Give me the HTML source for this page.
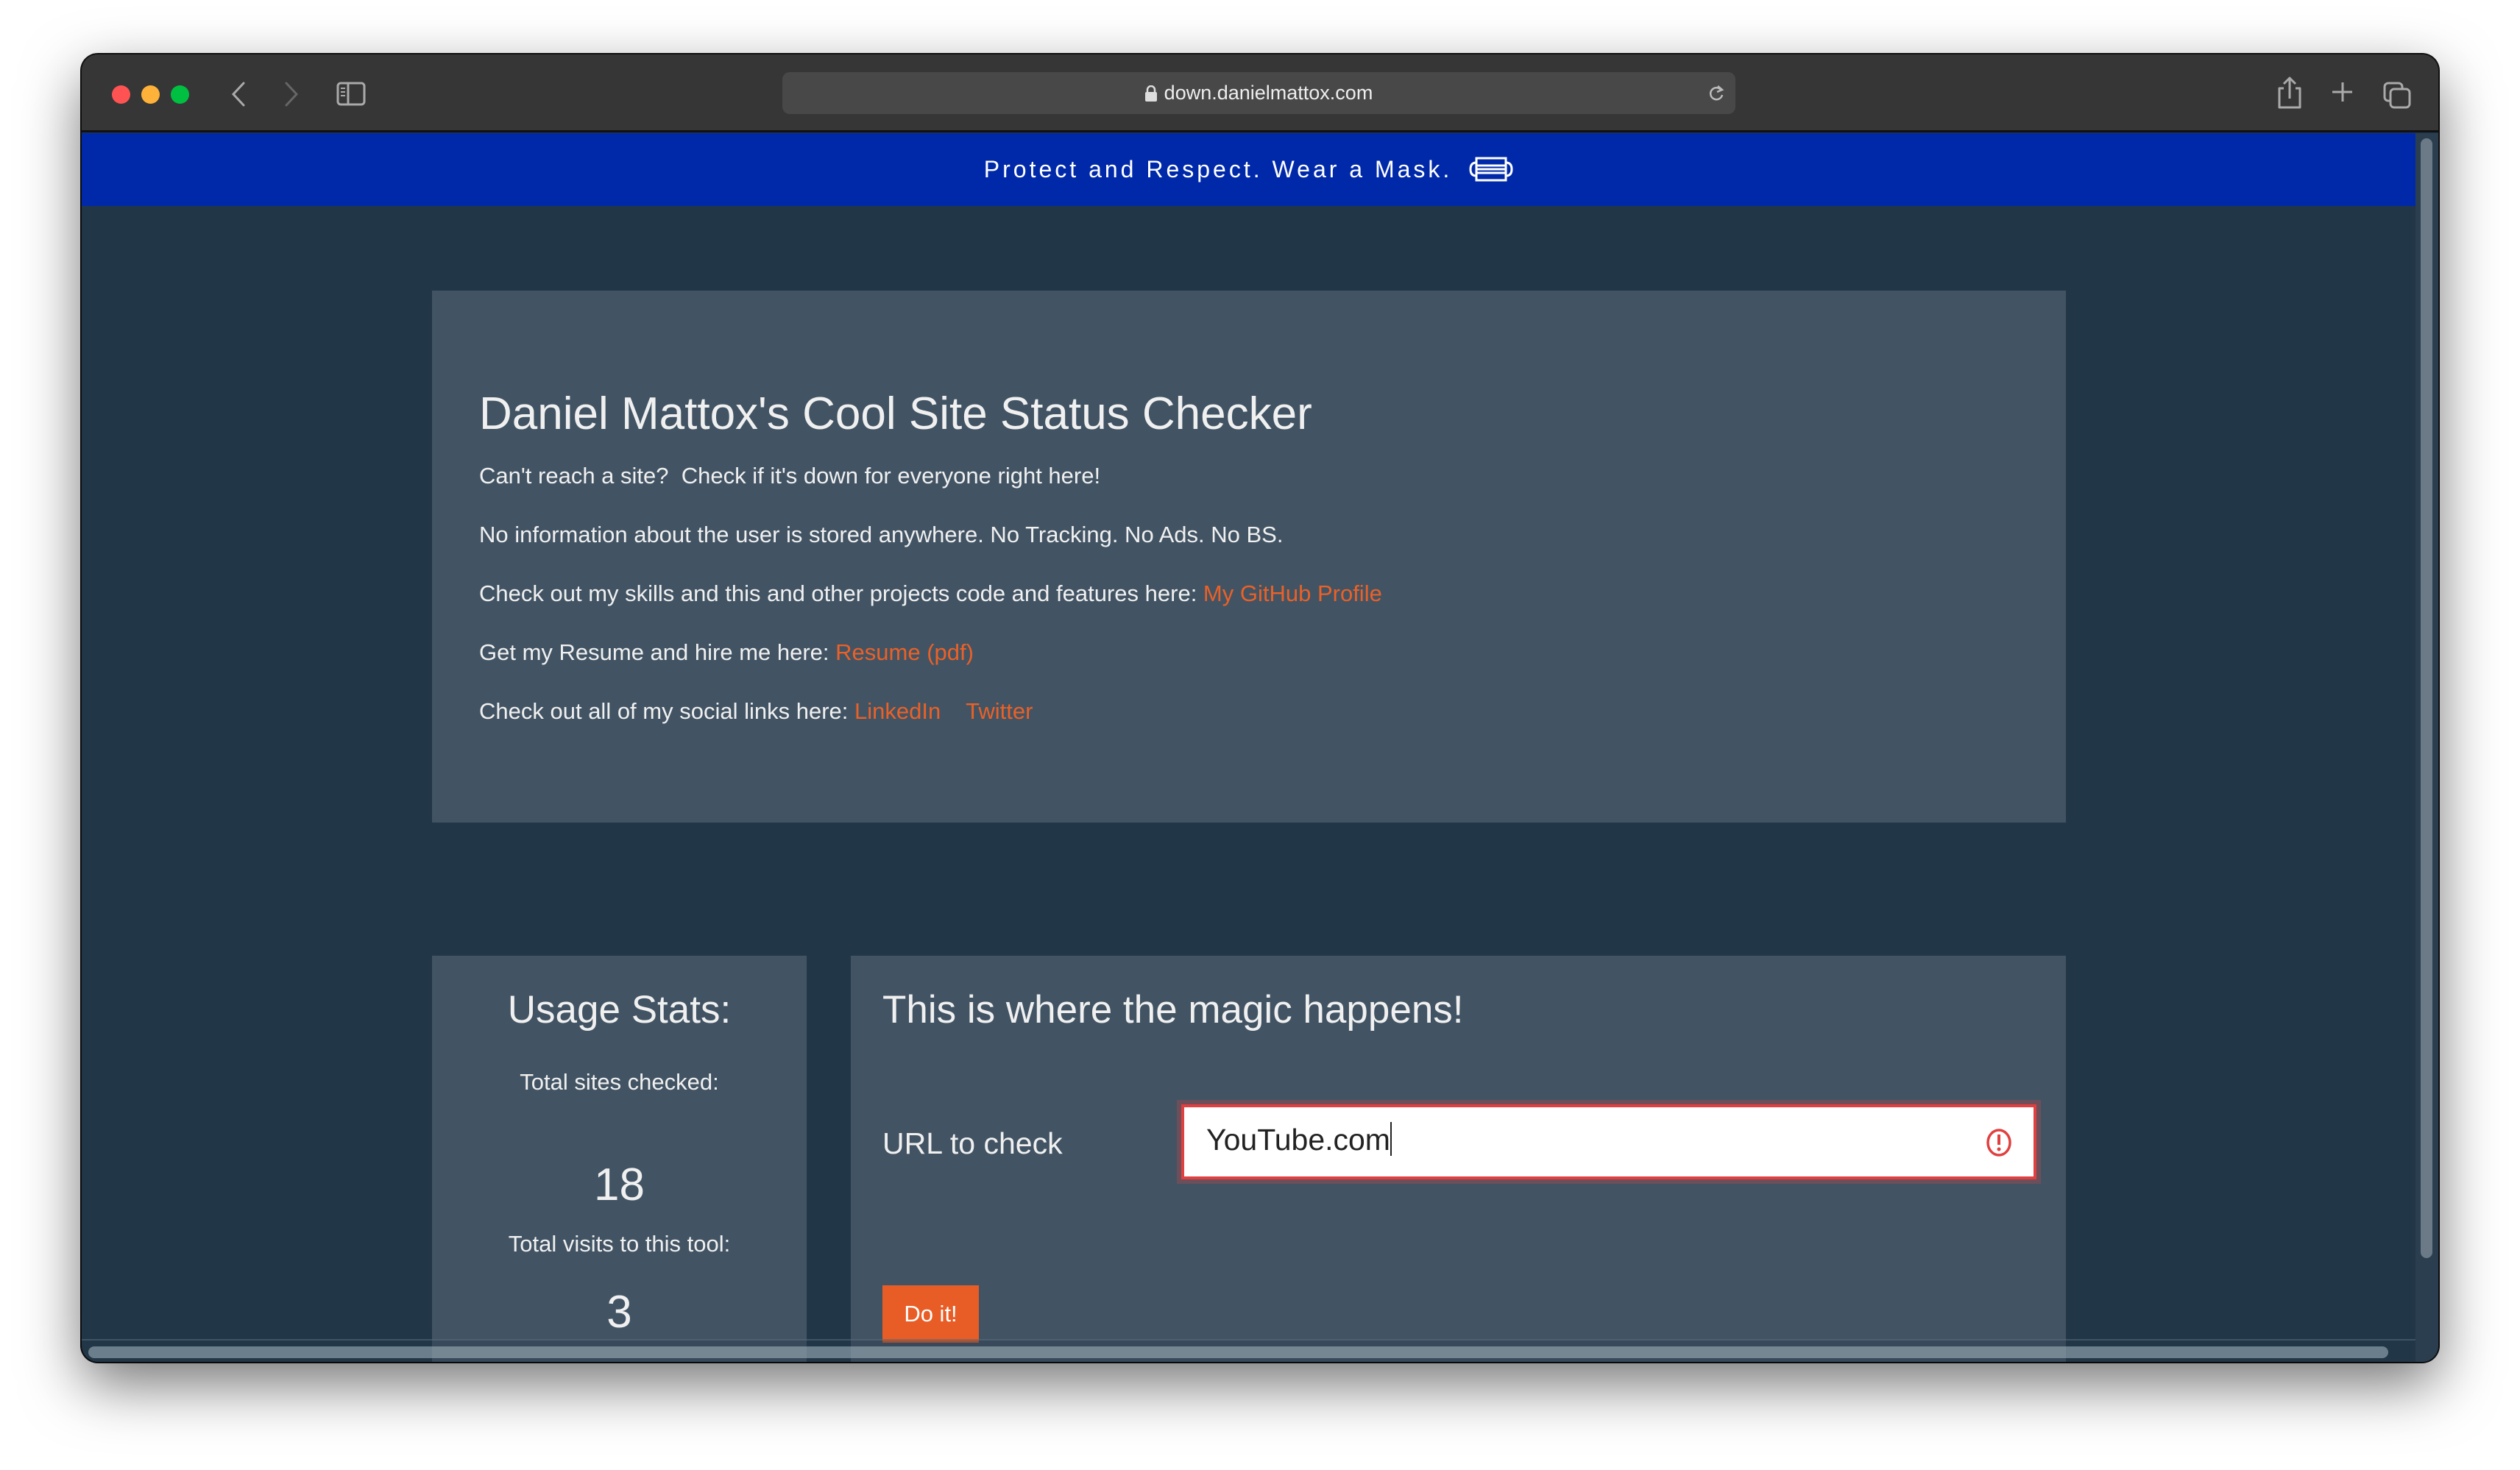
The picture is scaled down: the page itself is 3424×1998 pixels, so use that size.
<!DOCTYPE html>
<html><head><meta charset="utf-8"><style>
*{margin:0;padding:0;box-sizing:border-box}
html,body{width:3424px;height:1998px;background:#fff;overflow:hidden;font-family:"Liberation Sans",sans-serif}
.win{position:absolute;left:111px;top:74px;width:3202px;height:1777px;border-radius:22px;overflow:hidden;background:#213647;box-shadow:0 30px 80px rgba(0,0,0,.55),0 0 0 2px #111}
.tb{position:absolute;left:0;top:0;width:100%;height:106px;background:#363636;border-bottom:3px solid #111}
.dot{position:absolute;top:42px;width:25px;height:25px;border-radius:50%}
.url{position:absolute;left:952px;top:24px;width:1295px;height:57px;background:#484848;border-radius:10px;color:#eee;font-size:27px;text-align:center;line-height:57px}
.banner{position:absolute;left:0;top:107px;width:3171px;height:99px;background:#0029aa;color:#fff;font-size:32px;letter-spacing:4px;text-align:center;line-height:99px}
.card{position:absolute;background:#425464;color:#f0f0f0}
.t{position:absolute;white-space:nowrap}
a{color:#ea6127;text-decoration:none}
</style></head><body>
<div class="win">
 <div class="tb">
  <div class="dot" style="left:41px;background:#ff5353"></div>
  <div class="dot" style="left:81px;background:#ffb239"></div>
  <div class="dot" style="left:121px;background:#00c041"></div>
  <svg style="position:absolute;left:200px;top:36px" width="300" height="40" viewBox="0 0 300 40">
   <path d="M20 3 L6 18 L20 33" stroke="#aaa" stroke-width="3" fill="none" stroke-linecap="round"/>
   <path d="M78 3 L92 18 L78 33" stroke="#666" stroke-width="3" fill="none" stroke-linecap="round"/>
   <rect x="148" y="3" width="36" height="29" rx="4" stroke="#aaa" stroke-width="3" fill="none"/>
   <line x1="162" y1="3" x2="162" y2="32" stroke="#aaa" stroke-width="3"/>
   <line x1="152" y1="10" x2="158" y2="10" stroke="#aaa" stroke-width="2"/><line x1="152" y1="15" x2="158" y2="15" stroke="#aaa" stroke-width="2"/><line x1="152" y1="20" x2="158" y2="20" stroke="#aaa" stroke-width="2"/>
  </svg>
  <div class="url"><svg width="16" height="22" viewBox="0 0 16 22" style="vertical-align:-3px;margin-right:10px"><path d="M3 10V6a5 5 0 0 1 10 0v4" stroke="#ddd" stroke-width="2.5" fill="none"/><rect x="0" y="9" width="16" height="13" rx="2" fill="#ddd"/></svg>down.danielmattox.com
   <svg style="position:absolute;right:14px;top:16px" width="24" height="26" viewBox="0 0 24 26"><path d="M19 9 A8 8 0 1 0 20 15" stroke="#bbb" stroke-width="2.5" fill="none"/><path d="M14 3 L20 8 L13 11" stroke="#bbb" stroke-width="2.5" fill="none"/></svg>
  </div>
  <svg style="position:absolute;left:2980px;top:30px" width="190" height="48" viewBox="0 0 190 48">
   <path d="M12 16 H6 V42 H34 V16 H28 M20 30 V3 M12 10 L20 2 L28 10" stroke="#aaa" stroke-width="3" fill="none" stroke-linejoin="round"/>
   <path d="M92 8 V34 M78 21 H105" stroke="#aaa" stroke-width="3"/>
   <rect x="149" y="9" width="24" height="24" rx="5" stroke="#aaa" stroke-width="3" fill="none"/>
   <rect x="157" y="17" width="26" height="25" rx="5" stroke="#aaa" stroke-width="3" fill="#363636"/>
  </svg>
 </div>
 <div class="banner">Protect and Respect. Wear a Mask. <svg width="60" height="34" viewBox="0 0 60 34" style="vertical-align:-6px;margin-left:10px"><path d="M10 8 Q2 8 2 17 Q2 26 10 26 M50 8 Q58 8 58 17 Q58 26 50 26" stroke="#fff" stroke-width="3" fill="none"/><rect x="10" y="2" width="40" height="30" stroke="#fff" stroke-width="3" fill="none"/><line x1="10" y1="12" x2="50" y2="12" stroke="#fff" stroke-width="3"/><line x1="10" y1="17" x2="50" y2="17" stroke="#fff" stroke-width="3"/><line x1="10" y1="22" x2="50" y2="22" stroke="#fff" stroke-width="3"/></svg></div>

 <div class="card" style="left:476px;top:321px;width:2220px;height:723px">
  <div class="t" style="left:64px;top:132px;font-size:62px">Daniel Mattox's Cool Site Status Checker</div>
  <div class="t" style="left:64px;top:234px;font-size:31px">Can't reach a site?&nbsp; Check if it's down for everyone right here!</div>
  <div class="t" style="left:64px;top:314px;font-size:31px">No information about the user is stored anywhere. No Tracking. No Ads. No BS.</div>
  <div class="t" style="left:64px;top:394px;font-size:31px">Check out my skills and this and other projects code and features here: <a>My GitHub Profile</a></div>
  <div class="t" style="left:64px;top:474px;font-size:31px">Get my Resume and hire me here: <a>Resume (pdf)</a></div>
  <div class="t" style="left:64px;top:554px;font-size:31px">Check out all of my social links here: <a>LinkedIn</a> &nbsp;&nbsp; <a>Twitter</a></div>
 </div>

 <div class="card" style="left:476px;top:1225px;width:509px;height:600px;text-align:center">
  <div style="position:absolute;left:0;width:100%;top:43px;font-size:53px">Usage Stats:</div>
  <div style="position:absolute;left:0;width:100%;top:154px;font-size:31px">Total sites checked:</div>
  <div style="position:absolute;left:0;width:100%;top:276px;font-size:62px">18</div>
  <div style="position:absolute;left:0;width:100%;top:374px;font-size:31px">Total visits to this tool:</div>
  <div style="position:absolute;left:0;width:100%;top:449px;font-size:62px">3</div>
 </div>

 <div class="card" style="left:1045px;top:1225px;width:1651px;height:600px">
  <div class="t" style="left:43px;top:43px;font-size:53px">This is where the magic happens!</div>
  <div class="t" style="left:43px;top:232px;font-size:41px">URL to check</div>
  <div style="position:absolute;left:449px;top:202px;width:1162px;height:102px;background:#fff;border:4px solid #e0403f;box-shadow:0 0 0 6px #6c4f5a">
   <div class="t" style="left:30px;top:20px;font-size:41px;color:#222">YouTube.com<span style="display:inline-block;width:2px;height:46px;background:#222;vertical-align:-8px"></span></div>
   <svg style="position:absolute;right:29px;top:28px" width="36" height="40" viewBox="0 0 36 40"><ellipse cx="18" cy="20" rx="15" ry="17" stroke="#e0403f" stroke-width="3.5" fill="none"/><line x1="18" y1="9" x2="18" y2="23" stroke="#e0403f" stroke-width="4"/><circle cx="18" cy="29" r="2.5" fill="#e0403f"/></svg>
  </div>
  <div style="position:absolute;left:43px;top:448px;width:131px;height:78px;background:#e85d26;color:#fff;font-size:31px;text-align:center;line-height:78px">Do it!</div>
 </div>

 <div style="position:absolute;left:0;top:1746px;width:3171px;height:31px;background:rgba(33,54,71,.35);border-top:2px solid rgba(120,140,155,.35)"></div>
 <div style="position:absolute;left:9px;top:1756px;width:3125px;height:16px;border-radius:8px;background:rgba(170,185,195,.55)"></div>
 <div style="position:absolute;left:3171px;top:107px;width:31px;height:1670px;background:#2a3e4f"></div>
 <div style="position:absolute;left:3178px;top:114px;width:16px;height:1522px;border-radius:8px;background:#6b7a86"></div>
</div>
</body></html>
